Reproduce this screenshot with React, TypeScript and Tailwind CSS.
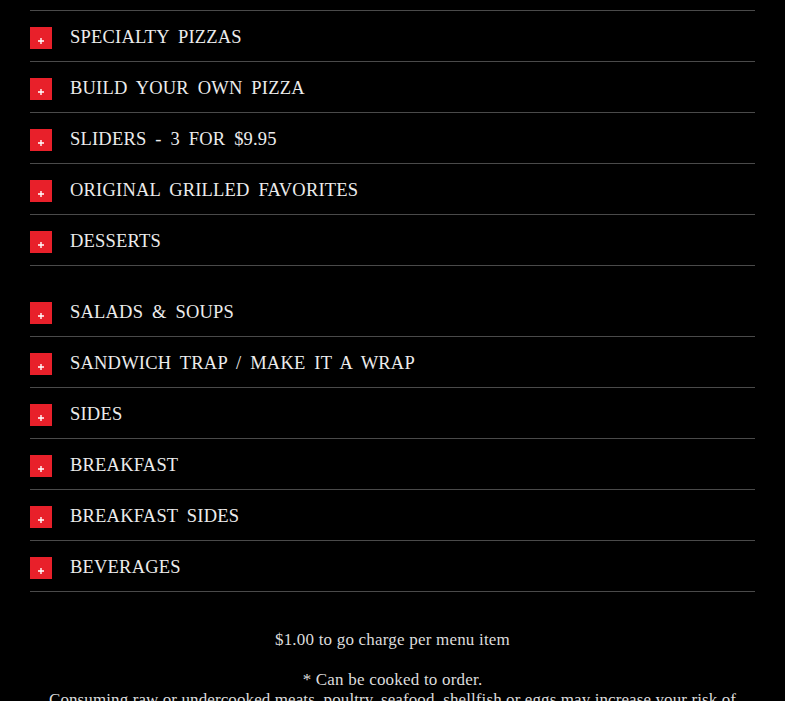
const groupA = [
  "Specialty Pizzas",
  "Build Your Own Pizza",
  "Sliders - 3 for $9.95",
  "Original Grilled Favorites",
  "Desserts",
];

const groupB = [
  "Salads & Soups",
  "Sandwich Trap / Make It A Wrap",
  "Sides",
  "Breakfast",
  "Breakfast Sides",
  "Beverages",
];

function PlusBox() {
  return (
    <span className="relative flex h-[22px] w-[22px] shrink-0 bg-[#e8202a] translate-y-[2px]">
      <svg width="8" height="8" viewBox="0 0 8 8" className="absolute left-[7px] top-[10px]">
        <path d="M4 1v6M1 4h6" stroke="#fff" strokeWidth="1.4" />
      </svg>
    </span>
  );
}

function Row({ label }: { label: string }) {
  return (
    <div className="flex h-[51px] items-center gap-[18px] border-b border-[#4a4a4a]">
      <PlusBox />
      <span className="pt-[4px] text-[18.5px] uppercase tracking-[0.2px] [word-spacing:4px] text-[#ececec]">
        {label}
      </span>
    </div>
  );
}

export default function App() {
  return (
    <div className="min-h-screen bg-black pt-[10px] px-[30px] font-['Liberation_Serif',serif]">
      <div className="flex flex-col border-t border-[#4a4a4a]">
        {groupA.map((l) => (
          <Row key={l} label={l} />
        ))}
      </div>
      <div className="mt-[20px] flex flex-col">
        {groupB.map((l) => (
          <Row key={l} label={l} />
        ))}
      </div>
      <div className="pt-[38px] text-center text-[17px] tracking-[0.2px] text-[#dcdcdc]">
        <p className="leading-[20px]">$1.00 to go charge per menu item</p>
        <p className="mt-[20px] leading-[20px]">* Can be cooked to order.</p>
        <p className="leading-[20px] tracking-[0.1px]">
          Consuming raw or undercooked meats, poultry, seafood, shellfish or eggs may increase your risk of foodborne illness.
        </p>
      </div>
    </div>
  );
}
